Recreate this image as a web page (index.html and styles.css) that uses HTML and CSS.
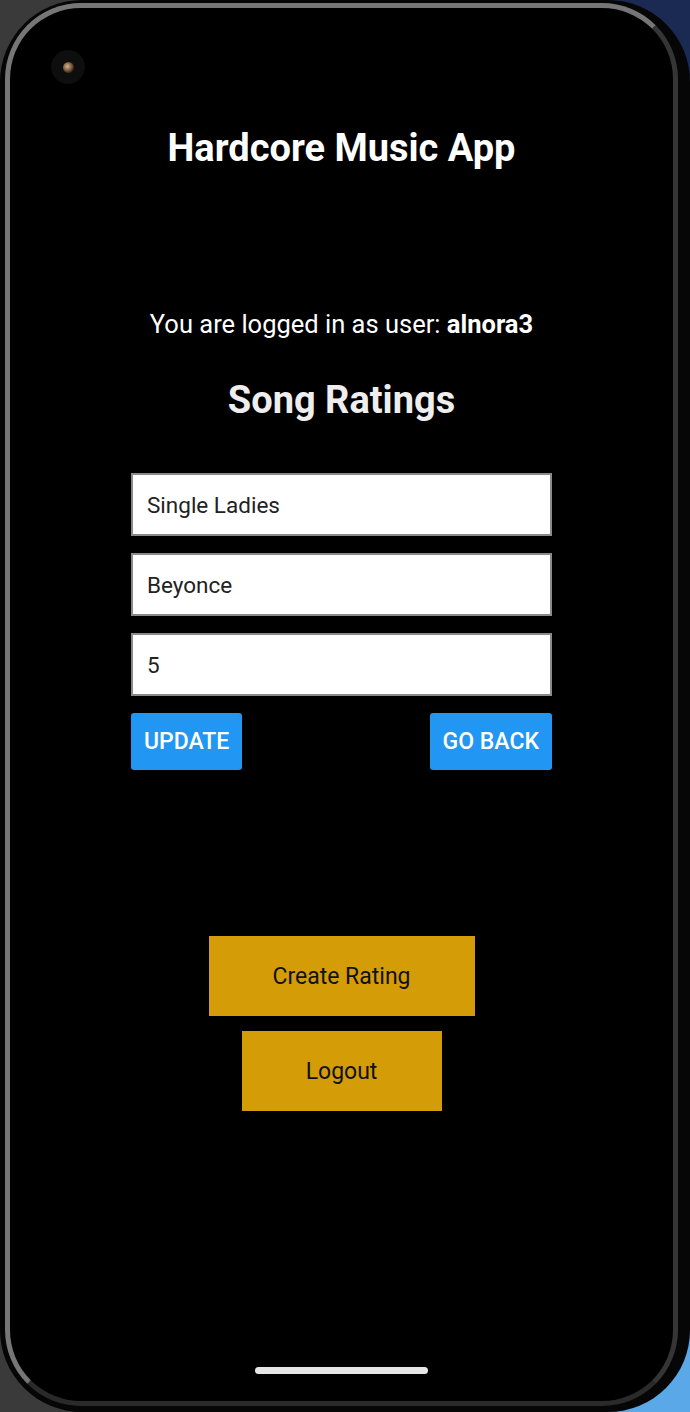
FILE: index.html
```html
<!DOCTYPE html>
<html>
<head>
<meta charset="utf-8">
<link rel="stylesheet" href="styles.css">
</head>
<body>
<div class="phone">
  <div class="frame">
    <div class="screen">
      <div class="camera"><div class="lens"></div></div>
      <h1 class="title">Hardcore Music App</h1>
      <p class="user">You are logged in as user: <b>alnora3</b></p>
      <h2 class="heading">Song Ratings</h2>
      <div class="form">
        <div class="field">Single Ladies</div>
        <div class="field">Beyonce</div>
        <div class="field">5</div>
        <div class="actions">
          <button class="btn-blue">UPDATE</button>
          <button class="btn-blue">GO BACK</button>
        </div>
      </div>
      <button class="btn-gold create">Create Rating</button>
      <button class="btn-gold logout">Logout</button>
      <div class="home-bar"></div>
    </div>
  </div>
</div>
</body>
</html>
```
FILE: styles.css
```css
html, body {
  margin: 0;
  padding: 0;
}
body {
  width: 690px;
  height: 1412px;
  background:
    linear-gradient(90deg, #3a3a3a 0 50%, transparent 50%),
    linear-gradient(180deg, #1b2a52 0%, #1b2a52 85%, #5aa8e8 92%, #5aa8e8 100%);
  font-family: Roboto, "Liberation Sans", sans-serif;
  overflow: hidden;
}
.phone {
  box-sizing: border-box;
  width: 690px;
  height: 1412px;
  border-radius: 82px;
  background: #060606;
  padding: 3px 12px 6px 5px;
}
.frame {
  box-sizing: border-box;
  height: 100%;
  border-radius: 76px;
  border: 5px solid #767676;
  border-right-color: #353535;
  border-bottom-color: #2a2a2a;
  background: #000;
  overflow: hidden;
}
.screen {
  position: relative;
  height: 100%;
  display: flex;
  flex-direction: column;
  align-items: center;
  color: #fff;
}
.camera {
  position: absolute;
  left: 41px;
  top: 42px;
  width: 34px;
  height: 34px;
  border-radius: 50%;
  background: #0e0e0e;
  display: flex;
  align-items: center;
  justify-content: center;
}
.lens {
  width: 11px;
  height: 11px;
  border-radius: 50%;
  background: radial-gradient(circle at 40% 40%, #d8b48c 0%, #7a5a3e 45%, #1c1410 80%);
}
.title {
  margin: 118px 0 0;
  font-size: 38px;
  line-height: 44px;
  font-weight: 700;
}
.user {
  margin: 138px 0 0;
  font-size: 25.5px;
  line-height: 32px;
}
.user b {
  font-weight: 700;
}
.heading {
  margin: 38px 0 0;
  font-size: 38px;
  line-height: 44px;
  font-weight: 700;
  color: #eeeeee;
}
.form {
  margin-top: 51px;
  width: 421px;
  display: flex;
  flex-direction: column;
  gap: 17px;
}
.field {
  box-sizing: border-box;
  height: 63px;
  background: #fff;
  border: 2px solid #8a8a8a;
  padding: 0 14px;
  display: flex;
  align-items: center;
  font-size: 22.5px;
  color: #222;
}
.actions {
  display: flex;
  justify-content: space-between;
}
.btn-blue {
  height: 57px;
  border: none;
  border-radius: 3px;
  background: #2196f3;
  color: #fff;
  font-family: Roboto, "Liberation Sans", sans-serif;
  font-size: 23px;
  font-weight: 500;
  padding: 0 13px;
}
.btn-gold {
  height: 80px;
  border: none;
  background: #d49c07;
  color: #111;
  font-family: Roboto, "Liberation Sans", sans-serif;
  font-size: 23px;
  padding: 0;
}
.create {
  margin-top: 166px;
  width: 266px;
}
.logout {
  margin-top: 15px;
  width: 200px;
}
.home-bar {
  margin-top: auto;
  margin-bottom: 27px;
  width: 173px;
  height: 7px;
  border-radius: 4px;
  background: #e6e6e6;
}
```
